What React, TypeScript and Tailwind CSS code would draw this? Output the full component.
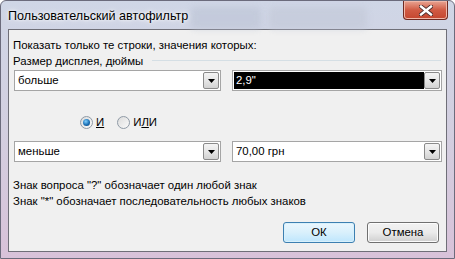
import React from "react";

const font = { fontFamily: '"Liberation Sans", Arial, sans-serif' };

function Arrow() {
  return (
    <div className="flex h-[17px] w-[16px] items-center justify-center rounded-[2px] border border-[#8a8a8a] bg-gradient-to-b from-[#f4f4f4] via-[#e6e6e6] to-[#d2d2d2]">
      <svg width="7" height="4" viewBox="0 0 7 4">
        <path d="M0 0h7L3.5 4z" fill="#000" />
      </svg>
    </div>
  );
}

function Combo({ value, width, selected }: { value: string; width: string; selected?: boolean }) {
  return (
    <div className={`flex h-[21px] items-center border border-[#a5a5a5] bg-white pl-[1px] pr-[1px] ${width}`}>
      <div className="flex h-[17px] flex-1 items-center">
        <span
          className={`flex h-[17px] items-center pl-[2px] leading-none ${
            selected ? "w-full bg-black text-white" : "text-black"
          }`}
        >
          {value}
        </span>
      </div>
      <Arrow />
    </div>
  );
}

function Radio({ checked }: { checked?: boolean }) {
  return (
    <div className="flex h-[13px] w-[13px] items-center justify-center rounded-full border border-[#8f9aa6] bg-gradient-to-br from-[#dcdcdc] to-[#fafafa]">
      {checked && (
        <div className="h-[7px] w-[7px] rounded-full bg-[radial-gradient(circle_at_40%_35%,#7fd0ff,#1a6fb5_55%,#0c3f70)]" />
      )}
    </div>
  );
}

function Button({ label, primary }: { label: string; primary?: boolean }) {
  return (
    <button
      className={`h-[21px] w-[72px] rounded-[3px] border text-[11.4px] text-black ${
        primary
          ? "border-[#3c7fb1] bg-gradient-to-b from-[#eaf6fd] via-[#d9f0fc] to-[#bee6fd] shadow-[inset_0_0_0_1px_#d8f0fb]"
          : "border-[#707070] bg-gradient-to-b from-[#f2f2f2] via-[#ebebeb] to-[#cfcfcf] shadow-[inset_0_0_0_1px_#fcfcfc]"
      }`}
    >
      {label}
    </button>
  );
}

export default function App() {
  return (
    <div
      className="flex h-[259px] w-[455px] flex-col overflow-hidden rounded-t-[6px] border border-[#6b6b7c] bg-gradient-to-b from-[#cfd6e6] via-[#d3cfe0] to-[#d8c2d9]"
      style={font}
    >
      <div className="relative flex h-[28px] items-start">
        <div className="absolute left-[190px] top-[6px] h-[22px] w-[70px] rounded bg-[#bcc4d5] opacity-60 blur-[3px]" />
        <div className="absolute left-[268px] top-[6px] h-[22px] w-[98px] rounded bg-[#c2c8d7] opacity-60 blur-[3px]" />
        <span className="relative ml-[7px] mt-[7px] text-[12.6px] leading-[16px] text-black [text-shadow:0_0_6px_#fff,0_0_3px_#fff]">
          Пользовательский автофильтр
        </span>
        <div className="relative ml-auto mr-[6px] flex h-[19px] w-[45px] items-center justify-center rounded-b-[4px] border border-t-0 border-[#6e2a22] bg-gradient-to-b from-[#e8a493] via-[#d05a43] to-[#c4462f] shadow-[inset_0_0_0_1px_#f0b7a8]">
          <svg width="14" height="11" viewBox="0 0 14 11">
            <path d="M2 1.5l10 8M12 1.5l-10 8" stroke="#4a2b2b" strokeWidth="4.2" strokeLinecap="square" />
            <path d="M2 1.5l10 8M12 1.5l-10 8" stroke="#fff" strokeWidth="2.4" strokeLinecap="square" />
          </svg>
        </div>
      </div>

      <div className="mx-[7px] mb-[6px] flex flex-1 flex-col border border-[#6f6f78] bg-[#f0f0f0] px-[4px] pt-[7px] text-[11.4px] text-black">
        <div className="leading-[16px]">Показать только те строки, значения которых:</div>
        <div className="flex items-center leading-[16px]">
          <span>Размер дисплея, дюймы</span>
          <div className="ml-[9px] mr-[1px] h-[2px] flex-1 border-t border-[#d5dfe5] border-b-white" />
        </div>

        <div className="mt-[1px] flex gap-[11px] pl-[1px]">
          <Combo value="больше" width="w-[207px]" />
          <Combo value={'2,9"'} width="w-[210px]" selected />
        </div>

        <div className="mt-[23px] flex h-[16px] items-center pl-[67px] leading-[16px]">
          <Radio checked />
          <span className="ml-[3px]">
            <u>И</u>
          </span>
          <span className="ml-[13px]">
            <Radio />
          </span>
          <span className="ml-[3px]">
            И<u>Л</u>И
          </span>
        </div>

        <div className="mt-[11px] flex gap-[11px] pl-[1px]">
          <Combo value="меньше" width="w-[207px]" />
          <Combo value="70,00 грн" width="w-[210px]" />
        </div>

        <div className="mt-[15px] leading-[16px]">Знак вопроса "?" обозначает один любой знак</div>
        <div className="leading-[16px]">Знак "*" обозначает последовательность любых знаков</div>

        <div className="mt-[13px] flex justify-end gap-[12px] pr-[3px]">
          <Button label="ОК" primary />
          <Button label="Отмена" />
        </div>
      </div>
    </div>
  );
}
